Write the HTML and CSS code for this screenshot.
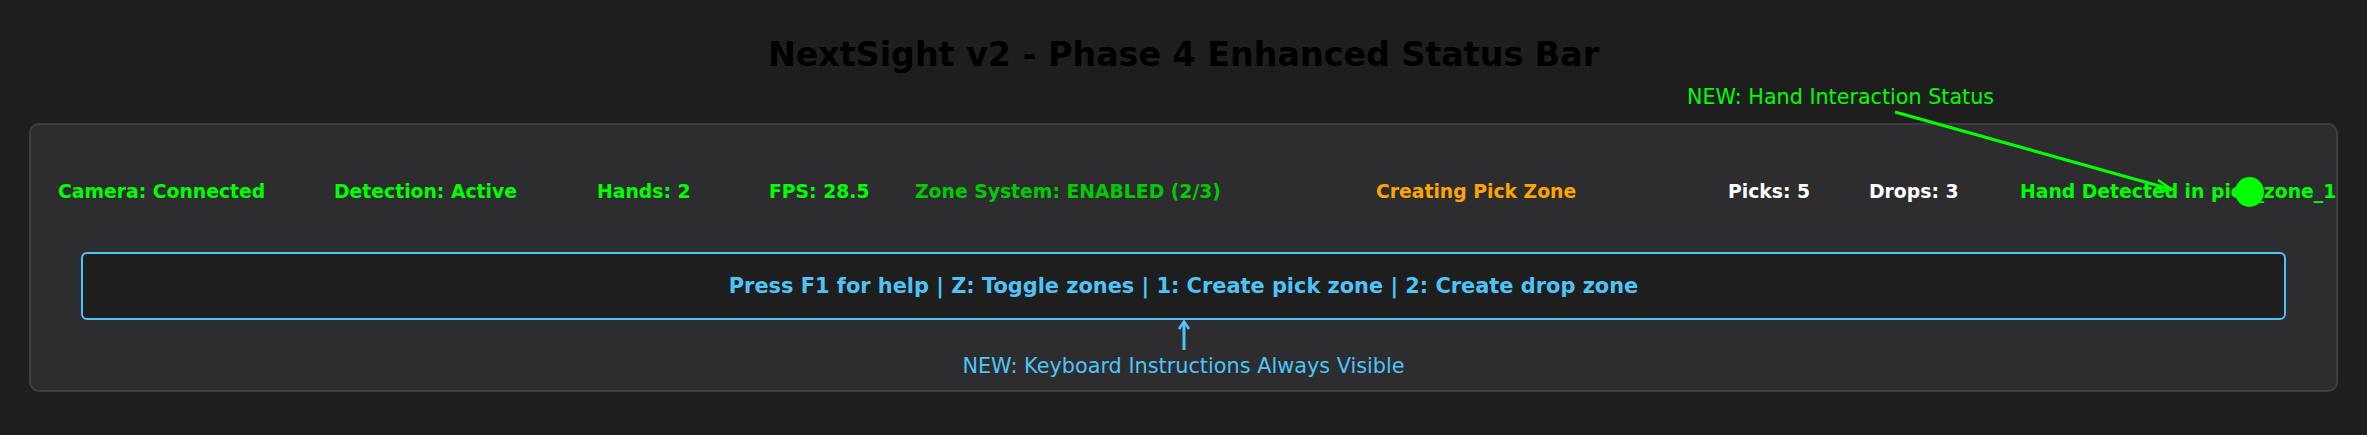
FILE: index.html
```html
<!DOCTYPE html>
<html lang="en">
<head>
<meta charset="utf-8">
<title>NextSight v2 - Phase 4 Enhanced Status Bar</title>
<link rel="stylesheet" href="styles.css">
</head>
<body>
<div class="page">
  <header class="header">
    <h1 class="title">NextSight v2 - Phase 4 Enhanced Status Bar</h1>
    <div class="callout-hand">NEW: Hand Interaction Status</div>
  </header>
  <section class="panel">
    <div class="status-row">
      <span class="st green">Camera: Connected</span>
      <span class="st green">Detection: Active</span>
      <span class="st green">Hands: 2</span>
      <span class="st green">FPS: 28.5</span>
      <span class="st zone">Zone System: ENABLED (2/3)</span>
      <span class="st orange">Creating Pick Zone</span>
      <span class="st white">Picks: 5</span>
      <span class="st white">Drops: 3</span>
      <span class="st green hand">Hand Detected in pick_zone_1<span class="hand-dot"></span></span>
    </div>
    <div class="help-box">Press F1 for help | Z: Toggle zones | 1: Create pick zone | 2: Create drop zone</div>
    <div class="help-note">
      <svg class="up-arrow" width="14" height="31" viewBox="0 0 14 31">
        <line x1="7" y1="2" x2="7" y2="30" stroke="#4fc3f7" stroke-width="3"/>
        <polyline points="2,9 7,1.5 12,9" fill="none" stroke="#4fc3f7" stroke-width="2.5"/>
      </svg>
      <div class="note-text">NEW: Keyboard Instructions Always Visible</div>
    </div>
  </section>
  <svg class="overlay" width="2367" height="435" viewBox="0 0 2367 435">
    <line x1="1895" y1="112" x2="2170" y2="189" stroke="#00ff00" stroke-width="3"/>
    <polyline points="2158,180 2172,189.5 2156,192" fill="none" stroke="#00ff00" stroke-width="2.5"/>
  </svg>
</div>
</body>
</html>
```
FILE: styles.css
```css
html, body {
  margin: 0;
  padding: 0;
  background: #1e1e1e;
}
body {
  font-family: "DejaVu Sans", "Liberation Sans", sans-serif;
}
.page {
  position: relative;
  width: 2367px;
  height: 435px;
  overflow: hidden;
}
.header {
  position: relative;
  height: 123px;
  box-sizing: border-box;
  padding-top: 34.5px;
}
.title {
  margin: 0;
  font-size: 33.3px;
  line-height: 40px;
  font-weight: bold;
  color: #000000;
  text-align: center;
}
.callout-hand {
  position: absolute;
  left: 1687px;
  top: 84.5px;
  font-size: 20.7px;
  line-height: 24px;
  color: #00ff00;
  white-space: nowrap;
}
.panel {
  margin: 0 29px;
  height: 269px;
  box-sizing: border-box;
  border: 2px solid #3e3e42;
  border-radius: 10px;
  background: #2d2d30;
  padding-top: 51.5px;
}
.status-row {
  display: grid;
  grid-template-columns: 276px 263px 172px 146px 461px 352px 141px 151px 1fr;
  padding-left: 27px;
  height: 30px;
  font-size: 18.8px;
  line-height: 30px;
  font-weight: bold;
  white-space: nowrap;
}
.st { display: block; }
.green { color: #00ff00; }
.zone { color: #00cc00; }
.orange { color: #ffa500; }
.white { color: #ffffff; }
.hand { position: relative; }
.hand-dot {
  position: absolute;
  left: 215px;
  top: 0;
  width: 29px;
  height: 30px;
  border-radius: 50%;
  background: #00ff00;
}
.help-box {
  margin: 45.5px 50px 0;
  height: 68px;
  box-sizing: border-box;
  border: 2px solid #4fc3f7;
  border-radius: 6px;
  background: #1e1e1e;
  display: flex;
  align-items: center;
  justify-content: center;
  color: #4fc3f7;
  font-size: 20.9px;
  font-weight: bold;
  white-space: nowrap;
}
.help-note {
  display: flex;
  flex-direction: column;
  align-items: center;
}
.up-arrow { display: block; }
.note-text {
  font-size: 20.8px;
  line-height: 30px;
  color: #4fc3f7;
  white-space: nowrap;
}
.overlay {
  position: absolute;
  left: 0;
  top: 0;
  pointer-events: none;
}
```
